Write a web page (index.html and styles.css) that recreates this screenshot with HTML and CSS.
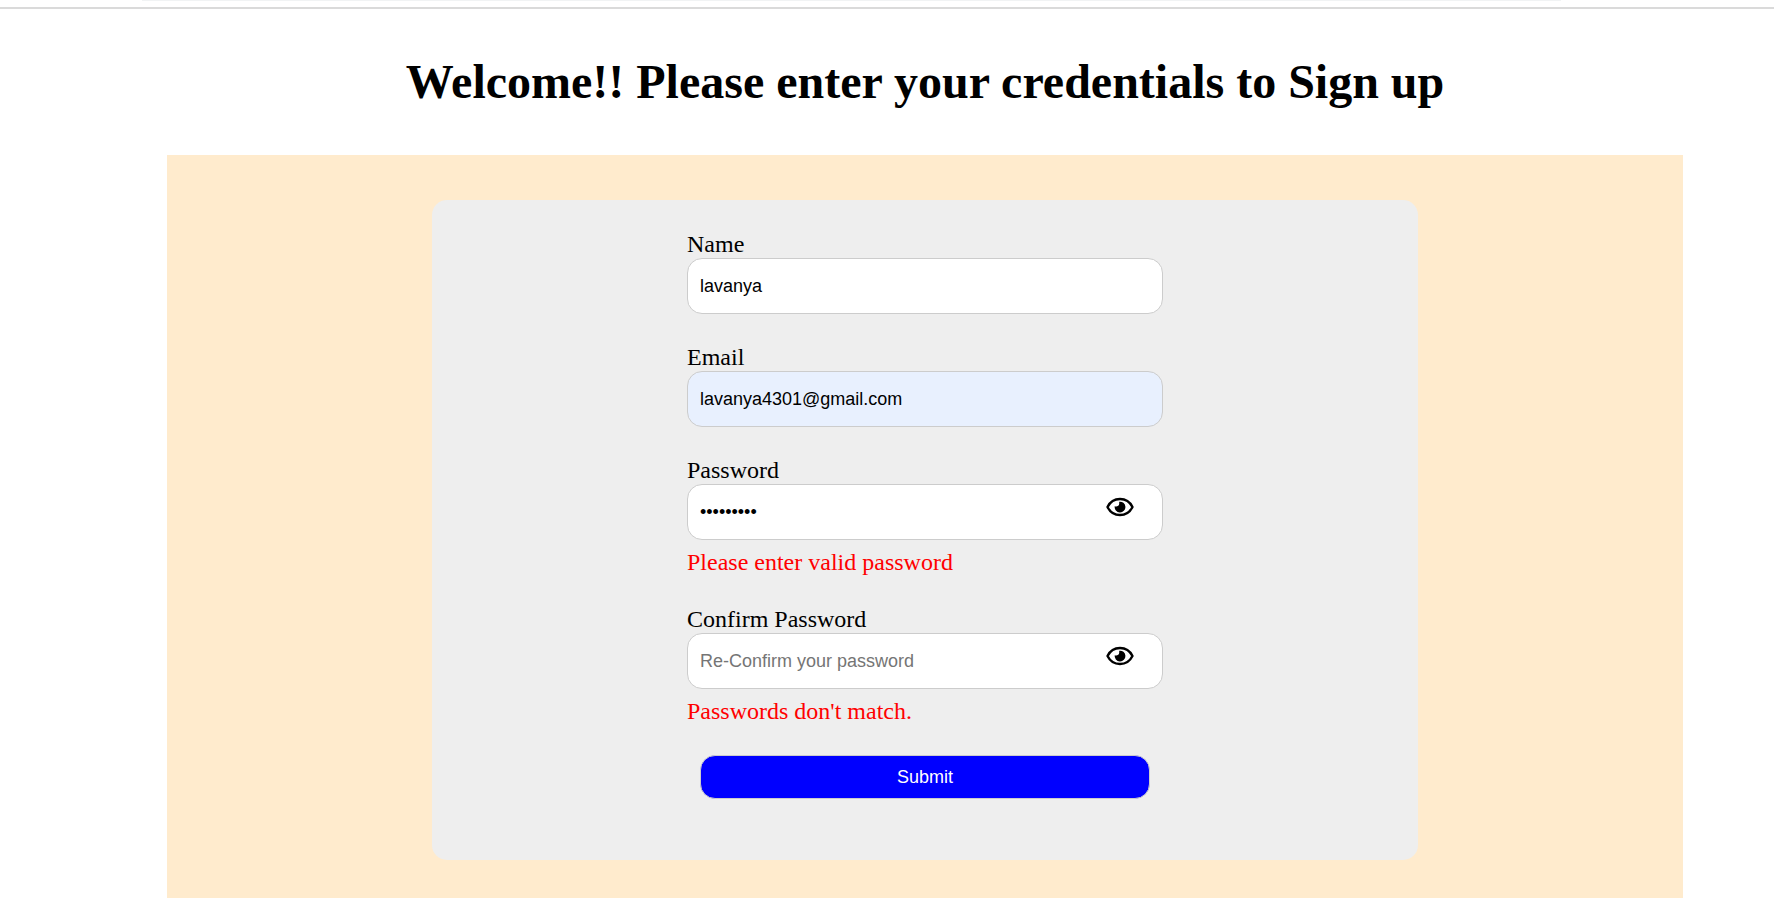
FILE: index.html
```html
<!DOCTYPE html>
<html lang="en">
<head>
<meta charset="utf-8">
<title>Sign up</title>
<link rel="stylesheet" href="styles.css">
</head>
<body>
<div class="topbar"><div class="topbar-edge"></div></div>
<main class="page">
  <h1 class="title">Welcome!! Please enter your credentials to Sign up</h1>
  <section class="panel">
    <form class="card">
      <div class="fields">
        <div class="field">
          <label class="label" for="name">Name</label>
          <input class="input" id="name" type="text" value="lavanya">
        </div>
        <div class="field">
          <label class="label" for="email">Email</label>
          <input class="input input-filled" id="email" type="email" value="lavanya4301@gmail.com">
        </div>
        <div class="field">
          <label class="label" for="password">Password</label>
          <div class="secret">
            <input class="input" id="password" type="password" value="lavanya43">
            <button class="eye" type="button" aria-label="Show password">
              <svg width="28" height="20" viewBox="0 0 28 20"><path d="M1.5 10C4 5 8.5 2 14 2s10 3 12.5 8C24 15 19.5 18 14 18S4 15 1.5 10Z" fill="none" stroke="#000" stroke-width="2.4" stroke-linejoin="round"/><path d="M13.2 4.7A5.4 5.4 0 1 1 8.7 9.2c1.500.9 4.500.2 4.500-2.400Z"/></svg>
            </button>
          </div>
          <p class="error">Please enter valid password</p>
        </div>
        <div class="field">
          <label class="label" for="confirm">Confirm Password</label>
          <div class="secret">
            <input class="input" id="confirm" type="password" placeholder="Re-Confirm your password">
            <button class="eye" type="button" aria-label="Show confirmed password">
              <svg width="28" height="20" viewBox="0 0 28 20"><path d="M1.5 10C4 5 8.5 2 14 2s10 3 12.5 8C24 15 19.5 18 14 18S4 15 1.5 10Z" fill="none" stroke="#000" stroke-width="2.4" stroke-linejoin="round"/><path d="M13.2 4.7A5.4 5.4 0 1 1 8.7 9.2c1.500.9 4.500.2 4.500-2.400Z"/></svg>
            </button>
          </div>
          <p class="error">Passwords don't match.</p>
        </div>
        <button class="submit" type="submit">Submit</button>
      </div>
    </form>
  </section>
</main>
</body>
</html>
```
FILE: styles.css
```css
* {
  box-sizing: border-box;
}

body {
  margin: 0;
  min-height: 100vh;
  display: flex;
  flex-direction: column;
  background: #fff;
  color: #000;
  font-family: "Liberation Serif", "Times New Roman", serif;
  font-size: 24px;
  line-height: 27px;
}

.topbar {
  height: 9px;
  border-bottom: 2px solid #dadada;
}

.topbar-edge {
  height: 1px;
  margin: 0 12% 0 8%;
  background: #f1f3f4;
}

.page {
  flex: 1;
  display: flex;
  flex-direction: column;
  margin: 0 91px 0 167px;
}

.title {
  margin: 46px 0;
  font-size: 48px;
  line-height: 54px;
  font-weight: bold;
  text-align: center;
}

.panel {
  flex: 1;
  padding: 45px 0 38px;
  background: #ffebcd;
}

.card {
  width: 65%;
  margin: 0 auto;
  padding: 31px 24px 61px;
  border-radius: 15px;
  background: #eee;
}

.fields {
  display: flex;
  flex-direction: column;
  gap: 30px;
  max-width: 476px;
  margin: 0 auto;
}

.field {
  display: flex;
  flex-direction: column;
}

.input {
  width: 100%;
  height: 56px;
  padding: 0 12px;
  border: 1px solid #ccc;
  border-radius: 15px;
  background: #fff;
  color: #000;
  font-family: "Liberation Sans", Arial, sans-serif;
  font-size: 18px;
}

.input::placeholder {
  color: #757575;
}

.input-filled {
  background: #e8f0fe;
}

.secret {
  position: relative;
  display: flex;
}

.eye {
  position: absolute;
  top: 13px;
  right: 29px;
  display: flex;
  padding: 0;
  border: 0;
  background: none;
}

.error {
  margin: 9px 0 0;
  color: #f00;
}

.submit {
  height: 44px;
  margin: 0 13px;
  border: 1px solid #ccc;
  border-radius: 15px;
  background: #00f;
  color: #fff;
  font-family: "Liberation Sans", Arial, sans-serif;
  font-size: 18px;
}
```
